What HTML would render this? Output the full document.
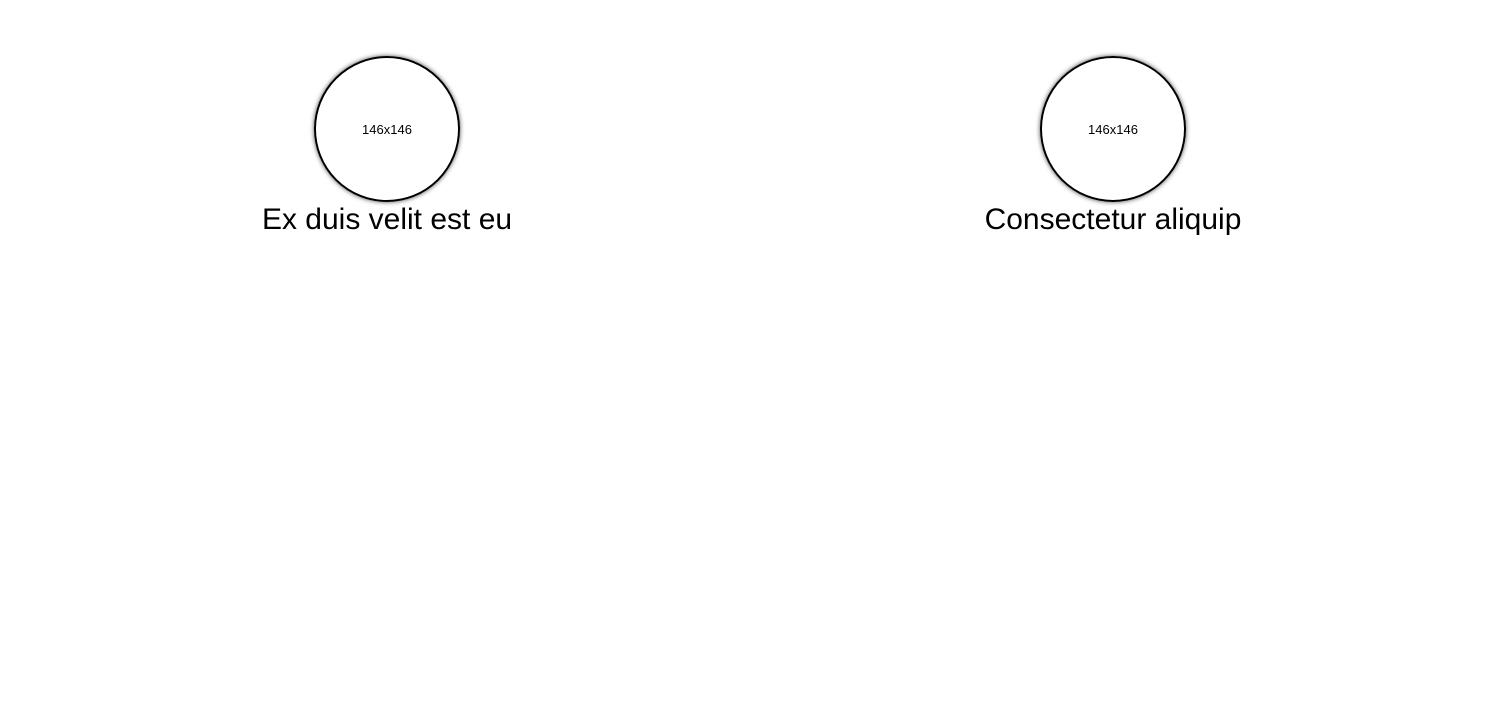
<!DOCTYPE html>
<html><head><style>
body{margin:0;background:#fff;width:1500px;height:720px;position:relative;font-family:"Liberation Sans",sans-serif;}
.c{position:absolute;top:56px;width:142px;height:142px;border:2px solid #000;border-radius:50%;box-shadow:0 0 5px rgba(0,0,0,.7);display:flex;align-items:center;justify-content:center;font-size:13px;color:#000;}
.t{position:absolute;top:203px;width:400px;text-align:center;font-size:30px;color:#000;}
</style></head><body>
<div class="c" style="left:314px">146x146</div>
<div class="t" style="left:187px">Ex duis velit est eu</div>
<div class="c" style="left:1040px">146x146</div>
<div class="t" style="left:913px">Consectetur aliquip</div>
</body></html>
